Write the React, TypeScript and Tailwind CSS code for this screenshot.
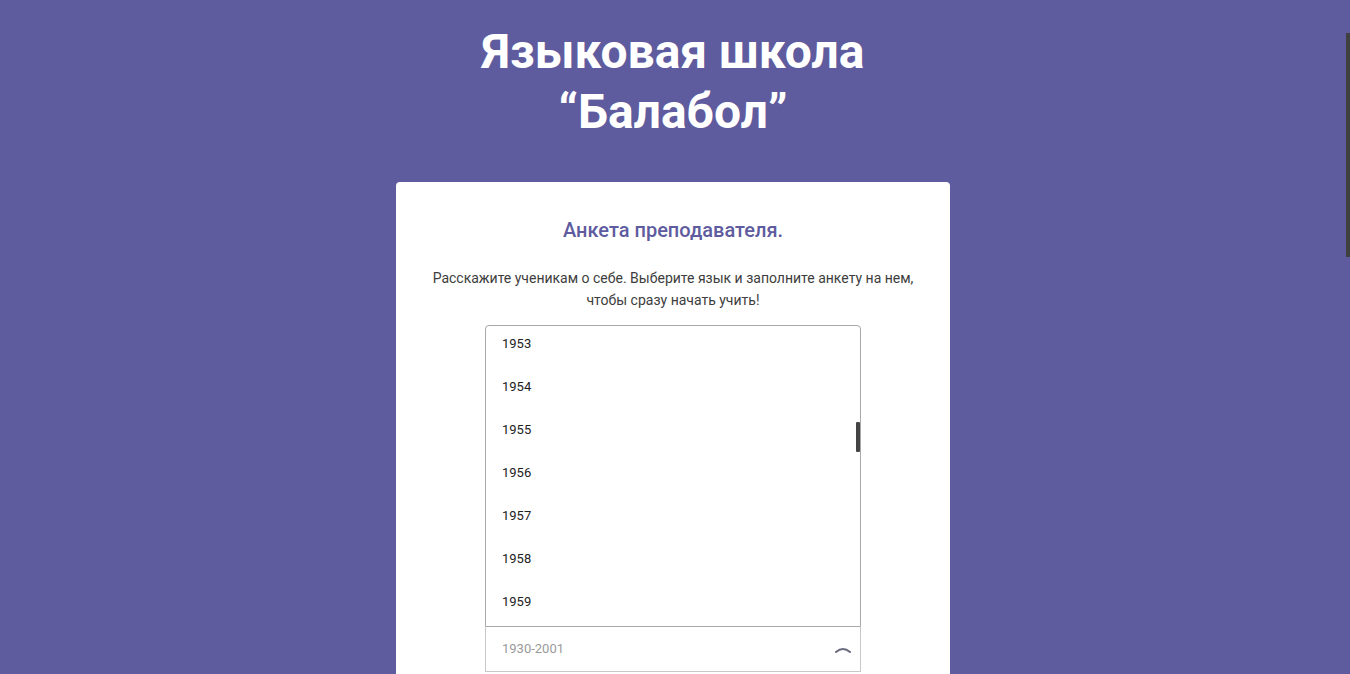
import React from 'react';

const years = [1953, 1954, 1955, 1956, 1957, 1958, 1959];

export default function App() {
  return (
    <div className="flex h-[674px] w-full overflow-hidden bg-[#5e5b9e]" style={{ fontFamily: 'Roboto, "Noto Sans", sans-serif' }}>
      <main className="flex flex-1 flex-col items-center">
        <h1 className="mt-[22px] text-center text-[48px] font-bold leading-[60px] text-white">
          Языковая школа
          <br />
          “Балабол”
        </h1>

        <section className="mt-[40px] flex w-[554px] flex-col items-center rounded-[4px] bg-white pt-[35px]">
          <h2 className="text-[20px] font-medium leading-[26px] text-[#5e5b9e]">Анкета преподавателя.</h2>
          <p className="mt-[24px] text-center text-[14px] leading-[22px] text-[#3d3d3d]">
            Расскажите ученикам о себе. Выберите язык и заполните анкету на нем,
            <br />
            чтобы сразу начать учить!
          </p>

          <div className="mt-[14px] w-[376px]">
            <div className="relative h-[302px] overflow-hidden rounded-t-[4px] border border-[#a8a8a8] bg-white">
              <ul className="-mt-[4px]">
                {years.map((y) => (
                  <li key={y} className="flex h-[43px] items-center pl-[16px] text-[13px] text-[#222]">
                    {y}
                  </li>
                ))}
              </ul>
              <div className="absolute right-0 top-[96px] h-[30px] w-[4px] rounded-[1px] bg-[#444]" />
            </div>
            <div className="flex h-[45px] items-center justify-between border border-t-0 border-[#c8c8c8] pl-[16px] pr-[8px]">
              <span className="text-[13px] text-[#9a9a9a]">1930-2001</span>
              <svg width="18" height="10" viewBox="0 0 18 10" className="mt-[1px]">
                <path d="M2 7 Q9 1 16 7" fill="none" stroke="#6b6b80" strokeWidth="2" strokeLinecap="round" />
              </svg>
            </div>
          </div>
          <div className="h-[40px]" />
        </section>
      </main>
      <div className="w-[4px] shrink-0">
        <div className="mt-[33px] h-[224px] w-[4px] bg-[#404040]" />
      </div>
    </div>
  );
}
